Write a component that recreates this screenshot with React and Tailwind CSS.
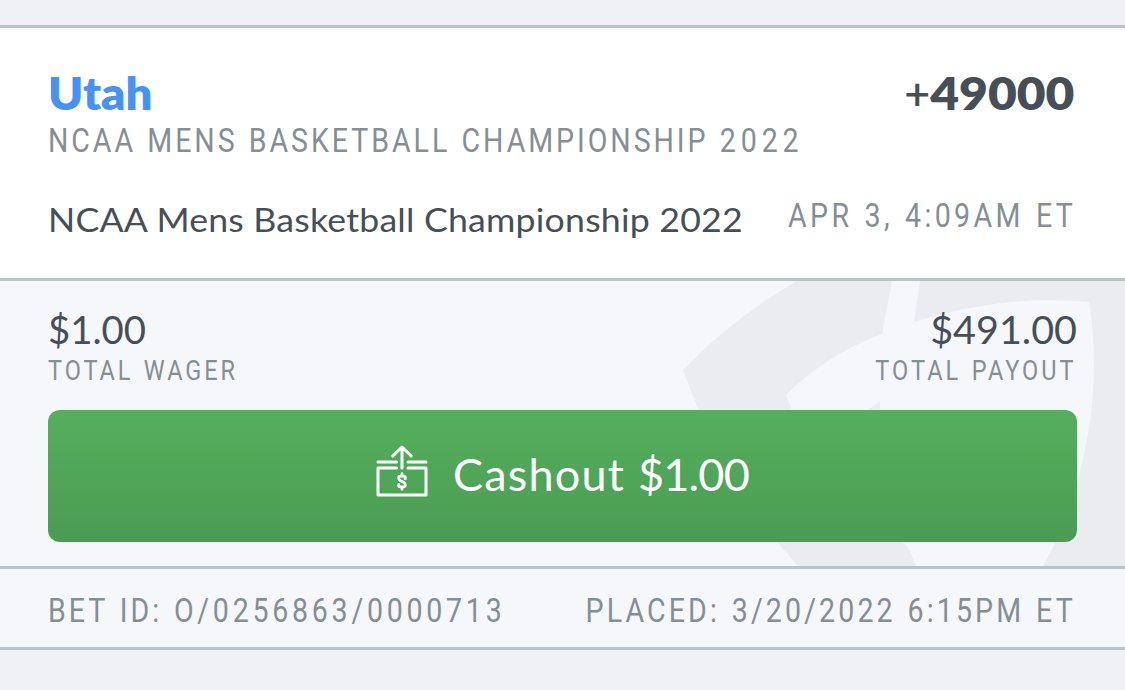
import { clsx } from 'clsx'

// Small grey uppercase text used for labels and meta info
function Label({ children, className }) {
  return (
    <span
      className={clsx(
        'block scale-x-[0.84] whitespace-nowrap font-["Roboto",sans-serif] font-normal text-[#868e95]',
        className
      )}
    >
      {children}
    </span>
  )
}

function CashoutIcon() {
  return (
    <svg width="52" height="52" viewBox="0 0 52 52" fill="none" stroke="white" strokeWidth="3" strokeLinecap="round" strokeLinejoin="round">
      <path d="M26 23V2.2M16.8 11L26 2L35.2 11" />
      <path d="M2 17H20.5M32 17H50" />
      <path d="M20.5 23H2V50H50V23H32" />
      <path d="M29.3 33.8V33Q29.3 31.2 27.5 31.2H24.5Q22.7 31.2 22.7 33Q22.7 34.8 24 35.4L28 37.4Q29.3 38 29.3 39.8Q29.3 41.8 27.5 41.8H24.5Q22.7 41.8 22.7 40V39.4M26 28.7V31M26 42V44.3" strokeWidth="2.8" />
    </svg>
  )
}

// Shield watermark behind the totals
function Watermark() {
  return (
    <svg className="absolute right-0 top-0" width="465" height="285" viewBox="660 281 465 285" fill="#ebecf0">
      <path d="M797 281H892L882 334Q827 354 786 395Q794 417 806 440L868 410L880 401V470Q888 520 902 542Q908 546 911 553L916 566H798L776 541Q722 478 683 370Q734 317 797 281Z" />
      <path d="M920 281H1125V566H1043Q1056 544 1064 522Q1106 410 1089 302Q1000 294 914 322Z" />
    </svg>
  )
}

function Amount({ value, label, right }) {
  return (
    <div className={clsx('flex flex-col gap-1', right ? 'items-end' : 'items-start')}>
      <span className={clsx('text-[39.5px] leading-[44px] text-[#464f57]', right ? 'origin-right' : 'origin-left scale-x-[0.97]')}>
        {value}
      </span>
      <Label className={clsx('text-[28px] leading-8 [word-spacing:2px]', right ? 'origin-right tracking-[3.6px]' : 'origin-left tracking-[3.5px]')}>
        {label}
      </Label>
    </div>
  )
}

export default function App() {
  return (
    <div className='h-[690px] w-[1125px] overflow-hidden bg-[#f0f1f7] pt-[25px] font-["Lato",sans-serif]'>
      <div className="border-y-[3px] border-[#b9c2c8]">
        {/* Selection */}
        <section className="h-[250px] bg-white px-12 pt-[41px]">
          <div className="flex justify-between text-[45px] font-extrabold leading-[48px]">
            <span className="origin-left scale-x-[1.05] text-[#4692f6]">Utah</span>
            <span className="origin-right scale-x-[1.105] pr-[2px] text-[#464f57]">
              <span className="inline-block origin-right scale-x-[0.9] font-semibold">+</span>49000
            </span>
          </div>
          <Label className="mt-[3px] origin-left text-[34px] leading-10 tracking-[3.5px] [word-spacing:1.5px]">
            NCAA MENS BASKETBALL CHAMPIONSHIP <span className="tracking-[5.8px]">2022</span>
          </Label>
          <div className="mt-[35px] flex justify-between">
            <span className="mt-1 origin-left scale-x-[1.065] whitespace-nowrap text-[33.5px] leading-10 tracking-[0.2px] text-[#464f57]">
              NCAA Mens Basketball Championship 2022
            </span>
            <Label className="origin-right pr-[1px] text-[34px] leading-10 tracking-[4px] [word-spacing:2px]">
              APR 3, 4:09AM ET
            </Label>
          </div>
        </section>

        {/* Totals and cashout */}
        <section className="relative h-[291px] border-y-[3px] border-[#b9c2c8] bg-[#f5f7fb]">
          <Watermark />
          <div className="relative px-12 pt-[26px]">
            <div className="flex justify-between">
              <Amount value="$1.00" label="TOTAL WAGER" />
              <Amount value="$491.00" label="TOTAL PAYOUT" right />
            </div>
            <button className="mt-[23px] flex h-[132px] w-full items-center justify-center gap-[25px] rounded-xl bg-linear-to-b from-[#55af5d] to-[#4b9c53] text-white">
              <span className="mb-[11px]">
                <CashoutIcon />
              </span>
              <span className="mb-[5px] text-[45px] leading-[48px]">
                <span className="tracking-[1.2px]">Cashout </span>
                <span className="tracking-[-0.8px]">$1.00</span>
              </span>
            </button>
          </div>
        </section>

        {/* Bet info */}
        <footer className="flex h-[78px] items-center bg-[#f5f7fb] px-12 pt-[3px]">
          <div className="flex w-1/2 justify-start">
            <Label className="origin-left text-[34px] leading-10 tracking-[3.6px] [word-spacing:2px]">
              BET ID: <span className="tracking-[4.45px]">O/0256863/0000713</span>
            </Label>
          </div>
          <div className="flex w-1/2 justify-end">
            <Label className="origin-right pr-[1px] text-[34px] leading-10 tracking-[3.7px] [word-spacing:2px]">
              PLACED: 3/20/2022 6:15PM ET
            </Label>
          </div>
        </footer>
      </div>
    </div>
  )
}
